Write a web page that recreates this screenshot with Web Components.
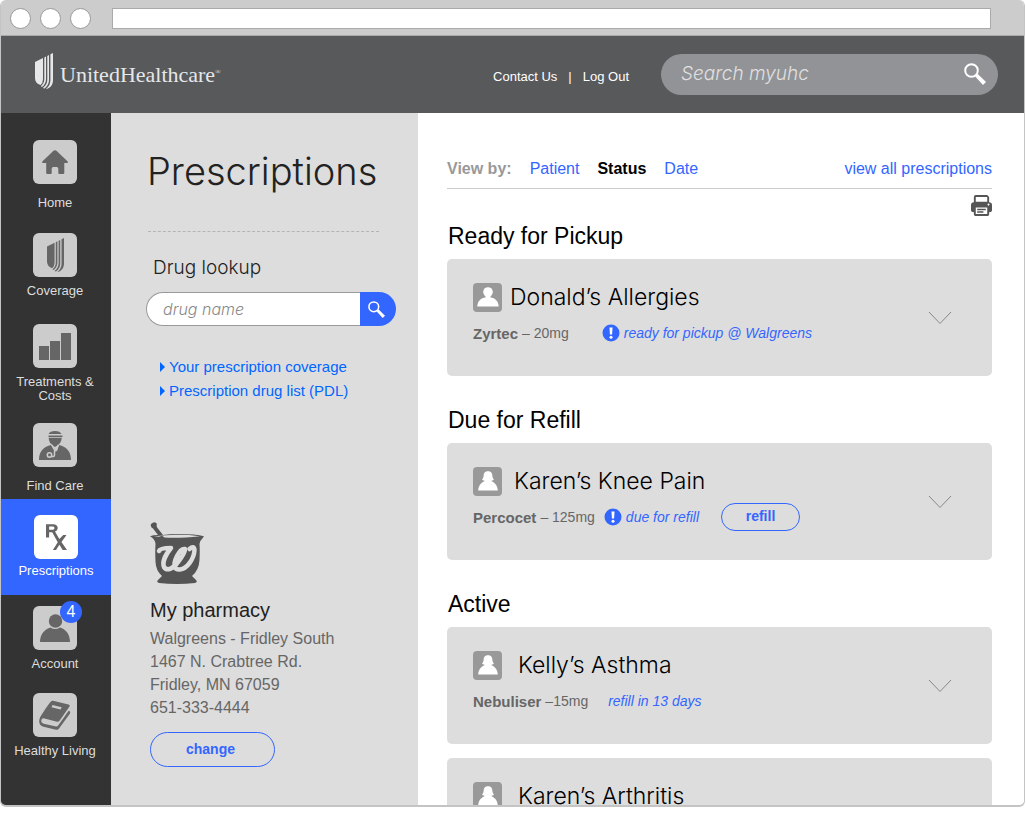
<!DOCTYPE html>
<html lang="en">
<head>
<meta charset="utf-8">
<title>myuhc - Prescriptions</title>
<style>
  :root {
    --sans: "Liberation Sans", Arial, sans-serif;
    --light: Inter, "Liberation Sans", sans-serif;
    --blue: #3366ff;
    --panel: #dddddd;
    --muted: #666666;
  }

  body {
    margin: 0;
    background: #fff;
    font-family: var(--sans);
  }
</style>
</head>
<body>
<browser-frame>
  <site-header></site-header>
  <page-layout>
    <side-nav slot="nav">
      <nav-item icon="home" roomy>Home</nav-item>
      <nav-item icon="shield" apart>Coverage</nav-item>
      <nav-item icon="bars" apart>Treatments &amp; Costs</nav-item>
      <nav-item icon="doctor" roomy>Find Care</nav-item>
      <nav-item icon="rx" current>Prescriptions</nav-item>
      <nav-item icon="person" badge="4">Account</nav-item>
      <nav-item icon="book">Healthy Living</nav-item>
    </side-nav>
    <lookup-panel slot="aside">
      <span slot="title">Prescriptions</span>
    </lookup-panel>
    <view-toolbar></view-toolbar>
    <rx-group heading="Ready for Pickup">
      <rx-card person="man" drug="Zyrtec" dose="– 20mg" alert far>
        Donald’s Allergies
        <span slot="status">ready for pickup @ Walgreens</span>
      </rx-card>
    </rx-group>
    <rx-group heading="Due for Refill">
      <rx-card person="woman" drug="Percocet" dose="– 125mg" alert>
        Karen’s Knee Pain
        <span slot="status">due for refill</span>
        <pill-button slot="action" small>refill</pill-button>
      </rx-card>
    </rx-group>
    <rx-group heading="Active">
      <rx-card person="woman" drug="Nebuliser" dose="–15mg" far>
        Kelly’s Asthma
        <span slot="status">refill in 13 days</span>
      </rx-card>
      <rx-card person="woman" far>Karen’s Arthritis</rx-card>
    </rx-group>
  </page-layout>
</browser-frame>

<script>
  (function () {
    const SHIELD = `
      <path d="M0 9 8 5V26q0 4-2.500 6C2 31 0 28.500 0 25z"/>
      <path d="M9.300 4.400 11 3.500V26c0 3.500-1.500 6-4 8l-1.200-.8C8.200 31 9.300 29 9.300 26z"/>
      <path d="M12.300 2.900 14 2V27c0 3.500-1.700 6.500-4.500 8.500L7.900 35C11 32.500 12.300 30 12.300 26.500z"/>
      <path d="M15.400 1.300 18 0V27c0 5-3 8.500-7 9 3-2.500 4.400-5.500 4.400-9z"/>`;

    // Each entry is [viewBox, markup].
    const ICONS = {
      shield: ["0 0 18 36", SHIELD],
      home: [
        "0 0 26 24",
        `<path d="M13 .3Q14 .3 15 1.200L25.700 11.500Q26.300 12.700 25 12.900H22.300V23Q22.300 24 21.300 24H17.300Q16.300 24 16.300 23V18.700Q16.300 17 14.700 17H11.300Q9.700 17 9.700 18.700V23Q9.700 24 8.700 24H5.200Q4.200 24 4.200 23V12.900H1Q-.3 12.700 .3 11.500L11 1.200Q12 .3 13 .3z"/>`,
      ],
      bars: [
        "0 0 32 27",
        `<path d="M0 13h10v14H0zM11 8h10v19H11zM22 0h10v27H22z"/>`,
      ],
      doctor: [
        "0 0 32 29",
        `<path d="M9.500 3Q11 0 16 0t6.500 3zM9.500 4.500h14v1.500h-14zM9.700 6.800h13c0 3.200-2 6.500-4.700 8l-2 1.200-2-1.200c-2.500-1.500-4.300-4.800-4.300-8z"/>
         <path d="M12 14C5 15.500 0 20 0 29h32c0-9-5-13.500-12-15l-2 6.500-2-2z"/>
         <path d="M12.500 13.500 16 20l3.500-6M15.500 20v4q0 2-3 1.500" fill="none" stroke="#ccc" stroke-width="1.500"/>
         <circle cx="10.500" cy="24" r="2.200" fill="none" stroke="#ccc" stroke-width="1.500"/>`,
      ],
      rx: [
        "0 0 22 28",
        `<path fill-rule="evenodd" d="M0 0h7.500c6 0 6 6.700 1.900 7.600L14 15.600 18 11.500h3.500l-5.300 7.200L22 27h-4.500l-3.500-5.500L10.500 27H7.200l5.100-7.900L6.500 8.500H3.300V14H0zM3.300 2.600v3.400h4c2 0 2-3.400 0-3.400z"/>`,
      ],
      person: [
        "0 0 30 28",
        `<circle cx="15.500" cy="7" r="6.700"/><path d="M0 28c0-8 5-13 10.500-14.500q4.500 3 9.500 0C25.500 15 30 20 30 28z"/>`,
      ],
      book: [
        "0 0 32 30",
        `<path fill-rule="evenodd" d="M14 .8 29.500 4.500q1.700.5 1 2L20.500 20.700q-1 1.300-2.500 1L5.500 18.400q-3.500-.3-3.200 2.600c.1 1.600 1 2.300 2.500 2.700L17 26.500q1.200.2 2-.8L29.700 10.800q2 .3 1.300 2.700L20 28.500q-1 1.700-3 1.200L3.500 26.400C.5 25.500-.5 22 .7 18.500 1.700 15.500 8 6.500 11 2.500Q12.300.5 14 .8zM13.500 5 12.500 7.200 21.500 9.400l1.200-2.200z"/>`,
      ],
      search: [
        "0 0 22 22",
        `<circle cx="7.500" cy="7.500" r="6.300" fill="none" stroke="currentColor" stroke-width="2"/><path d="M11 13.300 13.500 10.800 22 19 19 22z"/>`,
      ],
      printer: [
        "0 0 22 22",
        `<path fill-rule="evenodd" d="M5 0H17L19 2V7.500Q22 7.500 22 10.500V16Q22 18 19 18V20.500Q19 22 17.500 22H4.500Q3 22 3 20.500V18Q0 18 0 16V10.500Q0 7.500 3 7.500V2Q3 0 5 0zM5 2V7H17V2zM5 13V20H17V13zM18.300 9a1 1 0 1 0 .1 0z"/><path d="M6.500 14.300h9V16h-9zM6.500 17h6.500v1.700H6.500z"/>`,
      ],
      man: [
        "0 0 22 20",
        `<circle cx="11" cy="5" r="4.800"/><path d="M8.500 8h5v2.500C18 11 21.500 14 21.700 19.500H.3C.5 14 4 11 8.500 10.500z"/>`,
      ],
      woman: [
        "0 0 22 20",
        `<path d="M11 .2C7.500.2 6.800 2.500 6.700 4.500Q6.500 7.500 5 8.500Q6.500 9.800 8 10C4.500 11.500 1.500 14 1.200 19.500H20.800C20.500 14 17.500 11.500 14 10Q15.500 9.800 17 8.500Q15.500 7.500 15.300 4.500C15.200 2.500 14.500.2 11 .2z"/>`,
      ],
      chevron: [
        "0 0 24 14",
        `<path d="M1 1 12 12.500 23 1" fill="none" stroke="currentColor" stroke-width="1"/>`,
      ],
      alert: [
        "0 0 18 18",
        `<circle cx="9" cy="9" r="8.500"/><path d="M7.500 3.500h3L10.100 10.500H7.900z" fill="#fff"/><circle cx="9" cy="13.200" r="1.500" fill="#fff"/>`,
      ],
      mortar: [
        "0 0 54 62",
        `<path d="M1 2Q5-1.500 7 2 6 4 7.500 6L13 13Q19 12 28 12 46 12 54 14.200L52 17Q49.500 19 49.500 22 50 28 49.500 38 49 48 42 54L46 58Q48 60 45 61 27 63 9 61 6 60 8 58L12 54Q6 49 5.500 40 5 30 5.500 22 5 17 0 14.300 3 13 8 13L3 6.500Q0 5 1 2z"/>
         <path d="M4 14.300Q28 11.300 50 14.200 29 16.500 14.500 15.500L12 13.700 9 14.800z" fill="#ddd"/>
         <path d="M9 29Q10 26 21 26C16 32 12 40 14 45 17 50 24 46 28 40 32 35 35 30 35 27Q31 26 27 34C22 44 25 48 30 47.500 37 47 44 37 44.500 28Q44 23 39.500 27" fill="none" stroke="#ddd" stroke-width="4.500" stroke-linecap="round" stroke-linejoin="round"/>`,
      ],
    };

    // Defines an element whose shadow root is built from render(element).
    function define(name, render) {
      customElements.define(
        name,
        class extends HTMLElement {
          connectedCallback() {
            if (this.shadowRoot) {
              return;
            }
            const template = document.createElement("template");
            template.innerHTML = render(this);
            this.attachShadow({ mode: "open" });
            this.shadowRoot.appendChild(template.content.cloneNode(true));
          }
        }
      );
    }

    define("ui-icon", (el) => {
      const [box, markup] = ICONS[el.getAttribute("name")];
      return `
        <style>
          :host { display: block; flex: none; }
          svg { display: block; width: 100%; height: 100%; fill: currentColor; }
        </style>
        <svg viewBox="${box}" aria-hidden="true">${markup}</svg>`;
    });

    define("pill-button", () => `
      <style>
        :host { display: inline-block; }
        button {
          width: 125px;
          height: 35px;
          padding: 0 4px 2px 0;
          border: 1px solid var(--blue);
          border-radius: 18px;
          background: transparent;
          color: var(--blue);
          font: bold 14px var(--sans);
        }
        :host([small]) button { width: 79px; height: 28px; padding-right: 0; }
      </style>
      <button type="button"><slot></slot></button>`);

    define("browser-frame", () => `
      <style>
        :host {
          display: flex;
          flex-direction: column;
          box-sizing: border-box;
          height: calc(100vh - 6px);
          margin-right: 1px;
          border: 1px solid #c4c4c4;
          border-width: 0 1px 2px;
          border-radius: 6px;
          overflow: hidden;
        }
        .chrome {
          display: flex;
          flex: none;
          align-items: center;
          gap: 9px;
          height: 36px;
          padding: 2px 33px 0 9px;
          box-sizing: border-box;
          border-bottom: 1px solid #aaa;
          background: #ccc;
        }
        i {
          flex: none;
          width: 19px;
          height: 19px;
          border: 1px solid #999;
          border-radius: 50%;
          background: #fff;
        }
        .address {
          flex: 1;
          height: 19px;
          margin-left: 12px;
          border: 1px solid #aaa;
          background: #fff;
        }
      </style>
      <div class="chrome"><i></i><i></i><i></i><div class="address"></div></div>
      <slot></slot>`);

    define("site-header", () => `
      <style>
        :host {
          display: flex;
          flex: none;
          align-items: center;
          box-sizing: border-box;
          height: 77px;
          padding: 0 26px 0 34px;
          background: #58595b;
          color: #fff;
        }
        .brand {
          display: flex;
          align-items: center;
          gap: 7px;
          margin-right: auto;
          color: #e6e7e8;
          font: 22px "Liberation Serif", serif;
          text-decoration: none;
        }
        .brand ui-icon { width: 18px; height: 38px; margin-bottom: 8px; }
        sup { font-size: 7px; }
        nav {
          display: flex;
          gap: 11px;
          margin: 3px 32px 0 0;
          font-size: 13px;
        }
        nav a { color: inherit; text-decoration: none; }
        form {
          display: flex;
          align-items: center;
          box-sizing: border-box;
          width: 337px;
          height: 41px;
          padding: 0 12px 0 20px;
          border-radius: 21px;
          background: #929396;
        }
        input {
          flex: 1;
          min-width: 0;
          padding: 0 0 2px;
          border: 0;
          background: transparent;
          color: #fff;
          font: italic 300 19px var(--light);
        }
        input::placeholder { color: #e0e0e0; opacity: 1; }
        button { padding: 0 0 2px; border: 0; background: none; color: #fff; }
        button ui-icon { width: 22px; height: 22px; }
      </style>
      <a class="brand" href="#"><ui-icon name="shield"></ui-icon><span>UnitedHealthcare<sup>®</sup></span></a>
      <nav><a href="#">Contact Us</a><span>|</span><a href="#">Log Out</a></nav>
      <form>
        <input type="text" placeholder="Search myuhc" aria-label="Search myuhc">
        <button type="button" aria-label="Search"><ui-icon name="search"></ui-icon></button>
      </form>`);

    define("page-layout", () => `
      <style>
        :host {
          display: grid;
          grid-template-columns: 110px 307px 1fr;
          flex: 1;
          min-height: 0;
        }
        main {
          min-width: 0;
          padding: 44px 32px 0 29px;
          overflow: hidden;
        }
      </style>
      <slot name="nav"></slot>
      <slot name="aside"></slot>
      <main><slot></slot></main>`);

    define("side-nav", () => `
      <style>
        :host {
          display: block;
          box-sizing: border-box;
          padding-top: 16px;
          background: #333;
        }
      </style>
      <nav><slot></slot></nav>`);

    define("nav-item", (el) => {
      const badge = el.getAttribute("badge");
      return `
        <style>
          :host { display: block; color: #ddd; }
          :host([apart]) { padding-top: 6px; }
          a {
            display: flex;
            flex-direction: column;
            align-items: center;
            gap: 7px;
            padding: 11px 12px 11px 10px;
            color: inherit;
            font-size: 13px;
            line-height: 14px;
            text-align: center;
            text-decoration: none;
          }
          :host([roomy]) a { gap: 12px; padding-bottom: 6px; }
          :host([apart]) a { padding-bottom: 9px; }
          :host([current]) { background: var(--blue); color: #fff; }
          :host([current]) a { gap: 5px; padding: 16px 10px 17px; }
          .tile {
            position: relative;
            display: grid;
            place-items: center;
            width: 44px;
            height: 44px;
            border-radius: 6px;
            background: #ccc;
            color: var(--muted);
          }
          :host([current]) .tile { background: #fff; }
          [name="home"] { width: 26px; height: 24px; }
          [name="shield"] { width: 17px; height: 34px; }
          [name="bars"] { width: 32px; height: 27px; }
          [name="doctor"] { width: 32px; height: 29px; }
          [name="rx"] { width: 21px; height: 27px; }
          [name="person"] { width: 30px; height: 28px; }
          [name="book"] { width: 32px; height: 30px; }
          .badge {
            position: absolute;
            top: -5px;
            right: -5px;
            width: 22px;
            height: 22px;
            border-radius: 50%;
            background: var(--blue);
            color: #fff;
            font-size: 16px;
            line-height: 22px;
          }
        </style>
        <a href="#">
          <span class="tile">
            <ui-icon name="${el.getAttribute("icon")}"></ui-icon>
            ${badge ? `<span class="badge">${badge}</span>` : ""}
          </span>
          <span><slot></slot></span>
        </a>`;
    });

    define("lookup-panel", () => `
      <style>
        :host {
          display: block;
          box-sizing: border-box;
          padding: 34px 22px 0 35px;
          background: var(--panel);
          color: #222;
        }
        h1 {
          margin: 0 0 36px;
          padding-left: 1px;
          font: 300 38px/48px var(--light);
        }
        hr {
          margin: 0 17px 24px 2px;
          border: 0;
          border-top: 1px dashed #b4b4b4;
        }
        label {
          display: block;
          padding-left: 7px;
          font: 300 19px/24px var(--light);
        }
        form {
          display: flex;
          height: 34px;
          margin-top: 12px;
        }
        input {
          flex: 1;
          min-width: 0;
          padding: 0 16px;
          border: 1px solid #999;
          border-right: 0;
          border-radius: 17px 0 0 17px;
          background: #fff;
          font: italic 300 16px var(--light);
        }
        input::placeholder { color: #888; opacity: 1; }
        form button {
          display: grid;
          place-items: center;
          width: 36px;
          padding: 0 4px 0 0;
          border: 0;
          border-radius: 0 17px 17px 0;
          background: var(--blue);
          color: #fff;
        }
        form ui-icon { width: 17px; height: 17px; }
        ul {
          margin: 29px 0 119px;
          padding: 0 0 0 14px;
          list-style: none;
          font-size: 15px;
          line-height: 24px;
        }
        li { display: flex; align-items: center; gap: 4px; }
        li::before {
          content: "";
          border: 5px solid transparent;
          border-left-color: #0066ff;
          border-right-width: 0;
        }
        a { color: #0066ff; text-decoration: none; }
        section { padding-left: 4px; }
        [name="mortar"] { width: 54px; height: 62px; color: #555; }
        h2 {
          margin: 14px 0 5px;
          font-size: 20px;
          font-weight: 400;
          line-height: 24px;
        }
        address {
          margin-bottom: 13px;
          color: var(--muted);
          font-size: 16px;
          font-style: normal;
          line-height: 23px;
        }
      </style>
      <h1><slot name="title"></slot></h1>
      <hr>
      <label for="drug">Drug lookup</label>
      <form>
        <input id="drug" type="text" placeholder="drug name">
        <button type="button" aria-label="Look up drug"><ui-icon name="search"></ui-icon></button>
      </form>
      <ul>
        <li><a href="#">Your prescription coverage</a></li>
        <li><a href="#">Prescription drug list (PDL)</a></li>
      </ul>
      <section>
        <ui-icon name="mortar"></ui-icon>
        <h2>My pharmacy</h2>
        <address>
          Walgreens - Fridley South<br>
          1467 N. Crabtree Rd.<br>
          Fridley, MN 67059<br>
          651-333-4444
        </address>
        <pill-button>change</pill-button>
      </section>`);

    define("view-toolbar", () => `
      <style>
        :host { display: block; font-size: 16px; line-height: 24px; }
        .row {
          display: flex;
          gap: 18px;
          padding-bottom: 7px;
          border-bottom: 1px solid #ccc;
        }
        b { color: #999; }
        a { color: var(--blue); text-decoration: none; }
        a[aria-current] { color: #000; font-weight: bold; }
        .all { margin-left: auto; }
        button {
          display: block;
          margin: 6px 0 0 auto;
          padding: 0;
          border: 0;
          background: none;
          color: #555;
        }
        ui-icon { width: 21px; height: 21px; }
      </style>
      <div class="row">
        <b>View by:</b>
        <a href="#">Patient</a>
        <a href="#" aria-current="true">Status</a>
        <a href="#">Date</a>
        <a class="all" href="#">view all prescriptions</a>
      </div>
      <button type="button" aria-label="Print"><ui-icon name="printer"></ui-icon></button>`);

    define("rx-group", (el) => `
      <style>
        :host { display: block; margin-top: 30px; }
        :host(:first-of-type) { margin-top: 6px; }
        h2 {
          margin: 0 0 9px;
          padding-left: 1px;
          font-size: 23px;
          font-weight: 400;
          line-height: 28px;
        }
        .cards { display: grid; gap: 14px; }
      </style>
      <h2>${el.getAttribute("heading")}</h2>
      <div class="cards"><slot></slot></div>`);

    define("rx-card", (el) => `
      <style>
        :host {
          display: flex;
          align-items: center;
          justify-content: space-between;
          box-sizing: border-box;
          height: 117px;
          padding: 0 40px 0 26px;
          border-radius: 5px;
          background: var(--panel);
        }
        .body { padding-bottom: 6px; }
        .head { display: flex; align-items: center; gap: 8px; }
        :host([person="woman"]) .head { gap: 12px; }
        :host([person="woman"][far]) .head { gap: 16px; }
        .avatar {
          display: grid;
          place-items: center;
          width: 29px;
          height: 29px;
          border-radius: 4px;
          background: #999;
          color: #fff;
        }
        .avatar ui-icon { width: 22px; height: 20px; }
        h3 {
          margin: 0;
          font: 300 23px/30px var(--light);
        }
        .detail {
          display: flex;
          align-items: center;
          height: 28px;
          margin-top: 7px;
          color: var(--muted);
          font-size: 14px;
        }
        b { margin-right: 4px; font-size: 15px; }
        .status {
          display: flex;
          align-items: center;
          gap: 4px;
          margin: 0 22px 0 9px;
          color: var(--blue);
          font-style: italic;
        }
        :host([far]) .status { margin-left: 33px; }
        :host([person="woman"][far]) .status { margin-left: 20px; }
        .status ui-icon { width: 18px; height: 18px; }
        .more { padding: 0; border: 0; background: none; color: #888; }
        .more ui-icon { width: 24px; height: 14px; }
      </style>
      <div class="body">
        <div class="head">
          <span class="avatar"><ui-icon name="${el.getAttribute("person")}"></ui-icon></span>
          <h3><slot></slot></h3>
        </div>
        <div class="detail">
          <b>${el.getAttribute("drug") || ""}</b> ${el.getAttribute("dose") || ""}
          <span class="status">
            ${el.hasAttribute("alert") ? '<ui-icon name="alert"></ui-icon>' : ""}
            <slot name="status"></slot>
          </span>
          <slot name="action"></slot>
        </div>
      </div>
      <button class="more" type="button" aria-label="Show details"><ui-icon name="chevron"></ui-icon></button>`);
  })();
</script>
</body>
</html>
